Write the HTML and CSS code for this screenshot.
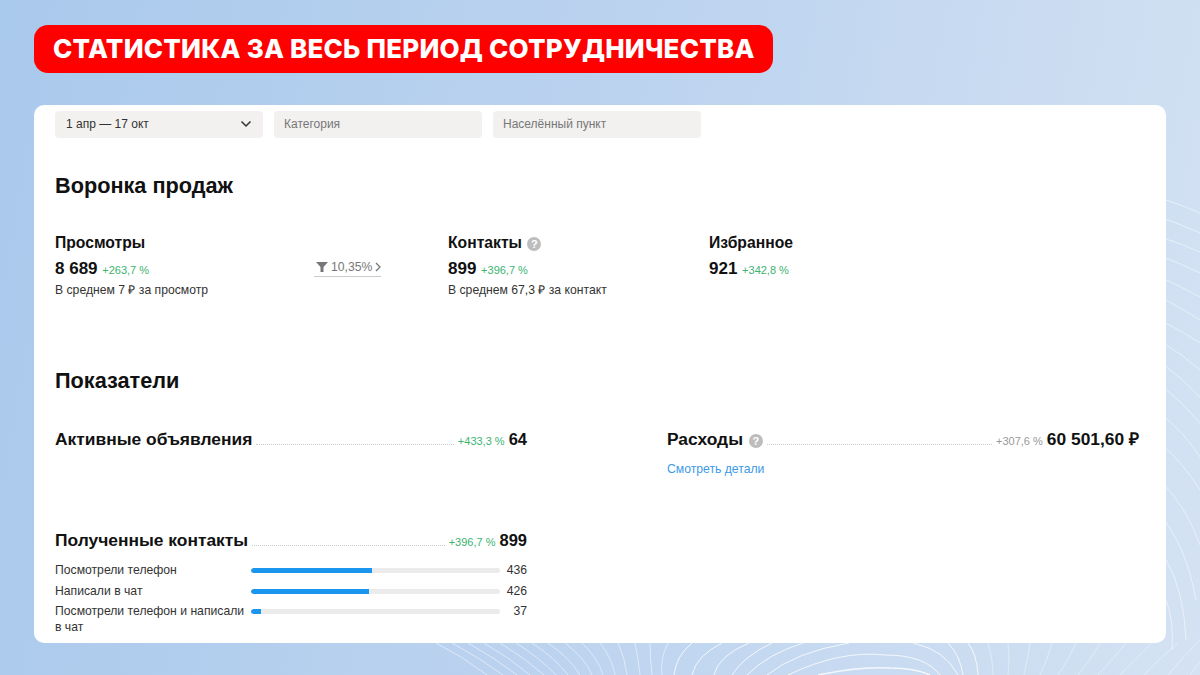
FILE: index.html
```html
<!DOCTYPE html>
<html lang="ru">
<head>
  <meta charset="UTF-8" />
  <title>Статистика за весь период сотрудничества</title>
  <link rel="stylesheet" href="styles.css">
</head>
<body>
  <svg class="waves" width="1200" height="675" viewBox="0 0 1200 675" fill="none" stroke="#fff">
    <!-- справа от карточки -->
    <g stroke-opacity="0.5">
      <path d="M1160 198Q1180 204 1200 213"/>
      <path d="M1160 217Q1180 224 1200 233"/>
      <path d="M1160 237Q1180 243 1200 252"/>
      <path d="M1160 256Q1180 263 1200 273"/>
      <path d="M1160 277Q1180 286 1200 297"/>
      <path d="M1160 297Q1180 307 1200 320"/>
      <path d="M1160 320Q1180 330 1200 343"/>
      <path d="M1160 341Q1182 354 1200 370"/>
      <path d="M1160 362Q1182 378 1200 397"/>
      <path d="M1160 384Q1182 402 1200 423"/>
      <path d="M1160 413Q1184 432 1200 457"/>
      <path d="M1160 443Q1184 464 1200 490"/>
      <path d="M1160 480Q1186 506 1200 545"/>
      <path d="M1160 515Q1186 545 1196 600"/>
      <path d="M1166 560Q1184 590 1186 640"/>
      <path d="M1166 600Q1174 620 1172 650"/>
    </g>
    <!-- под карточкой, веер слева -->
    <g stroke-opacity="0.5">
      <path d="M436 643Q462 656 487 675"/>
      <path d="M452 643Q480 658 503 675"/>
      <path d="M468 643Q495 658 517 675"/>
      <path d="M484 643Q510 658 530 675"/>
      <path d="M500 643Q525 658 544 675"/>
      <path d="M516 643Q540 658 556 675"/>
      <path d="M532 643Q555 658 568 675"/>
      <path d="M548 643Q570 658 580 675"/>
      <path d="M565 643Q585 658 592 675"/>
      <path d="M582 643Q598 658 603 675"/>
      <path d="M600 643Q612 658 615 675"/>
      <path d="M618 643Q625 658 627 675"/>
      <path d="M635 643Q638 658 640 675"/>
      <path d="M650 643Q650 658 652 675"/>
      <path d="M668 643Q660 658 662 675"/>
    </g>
    <!-- центральные петли -->
    <g stroke-opacity="0.8">
      <path d="M692 643Q676 656 674 675"/>
      <path d="M722 643Q696 656 692 675"/>
      <path d="M749 643Q718 656 714 675"/>
      <path d="M772 643Q744 656 732 675"/>
      <path d="M803 643Q768 654 747 675"/>
      <path d="M849 643Q796 652 767 675"/>
      <path d="M788 675Q840 650 885 655Q925 655 940 675"/>
      <path d="M818 675Q860 666 890 668Q915 668 930 675" stroke-width="1.500"/>
      <path d="M913 643Q945 650 958 675"/>
      <path d="M948 643Q960 655 963 675"/>
      <path d="M968 643Q977 655 978 675"/>
    </g>
    <!-- бледные линии справа внизу -->
    <g stroke-opacity="0.4">
      <path d="M988 643Q993 658 993 675"/>
      <path d="M1008 643Q1010 658 1008 675"/>
      <path d="M1030 643Q1028 658 1024 675"/>
      <path d="M1052 643Q1048 658 1040 675"/>
      <path d="M1076 643Q1070 658 1058 675"/>
      <path d="M1100 643Q1092 658 1078 675"/>
      <path d="M1126 643Q1114 658 1098 675"/>
      <path d="M1152 643Q1136 658 1120 675"/>
      <path d="M1178 643Q1160 658 1144 675"/>
      <path d="M1200 640Q1184 656 1168 675"/>
      <path d="M1200 662Q1194 668 1190 675"/>
    </g>
  </svg>

  <h1 class="banner">СТАТИСТИКА ЗА ВЕСЬ ПЕРИОД СОТРУДНИЧЕСТВА</h1>

  <main class="card">
    <div class="filters">
      <div class="filter filter-date">
        <span>1 апр — 17 окт</span>
        <svg width="12" height="8" viewBox="0 0 12 8" fill="none" stroke="#333" stroke-width="1.5"><path d="M1.5 1.5 6 6l4.500-4.500"/></svg>
      </div>
      <div class="filter filter-empty">Категория</div>
      <div class="filter filter-empty">Населённый пункт</div>
    </div>

    <h2 class="section-title">Воронка продаж</h2>

    <div class="funnel">
      <div class="funnel-col">
        <div class="funnel-name">Просмотры</div>
        <div class="funnel-value">8 689 <span class="delta">+263,7 %</span></div>
        <div class="funnel-note">В среднем 7 ₽ за просмотр</div>
        <div class="conversion">
          <svg width="12" height="10" viewBox="0 0 12 10" fill="#777"><path d="M0 0h12L7.500 5v5h-3V5z"/></svg>
          <span>10,35%</span>
          <svg width="6" height="10" viewBox="0 0 6 10" fill="none" stroke="#777" stroke-width="1.300"><path d="m1 1 4 4-4 4"/></svg>
        </div>
      </div>
      <div class="funnel-col">
        <div class="funnel-name">Контакты <span class="hint">?</span></div>
        <div class="funnel-value">899 <span class="delta">+396,7 %</span></div>
        <div class="funnel-note">В среднем 67,3 ₽ за контакт</div>
      </div>
      <div class="funnel-col">
        <div class="funnel-name">Избранное</div>
        <div class="funnel-value">921 <span class="delta">+342,8 %</span></div>
      </div>
    </div>

    <h2 class="section-title section-stats">Показатели</h2>

    <div class="stats">
      <div class="stats-left">
        <div class="stat-row">
          <span class="stat-name">Активные объявления</span>
          <span class="dots"></span>
          <span class="delta">+433,3 %</span>
          <span class="stat-value">64</span>
        </div>

        <div class="stat-row stat-contacts">
          <span class="stat-name">Полученные контакты</span>
          <span class="dots"></span>
          <span class="delta">+396,7 %</span>
          <span class="stat-value">899</span>
        </div>
        <div class="bars">
          <div class="bar-row">
            <span class="bar-name">Посмотрели телефон</span>
            <span class="bar-track"><span class="bar-fill" style="width: 48.5%"></span></span>
            <span class="bar-num">436</span>
          </div>
          <div class="bar-row">
            <span class="bar-name">Написали в чат</span>
            <span class="bar-track"><span class="bar-fill" style="width: 47.4%"></span></span>
            <span class="bar-num">426</span>
          </div>
          <div class="bar-row">
            <span class="bar-name">Посмотрели телефон и написали в чат</span>
            <span class="bar-track"><span class="bar-fill" style="width: 4.2%"></span></span>
            <span class="bar-num">37</span>
          </div>
        </div>
      </div>

      <div class="stats-right">
        <div class="stat-row">
          <span class="stat-name">Расходы <span class="hint">?</span></span>
          <span class="dots"></span>
          <span class="delta delta-grey">+307,6 %</span>
          <span class="stat-value">60 501,60 ₽</span>
        </div>
        <a class="details" href="#">Смотреть детали</a>
      </div>
    </div>
  </main>
</body>
</html>
```

FILE: styles.css
```css
* { box-sizing: border-box; }

body {
  margin: 0;
  width: 1200px;
  height: 675px;
  overflow: hidden;
  position: relative;
  padding: 25px 34px 0;
  font-family: "Liberation Sans", Arial, sans-serif;
  color: #111;
  background: linear-gradient(100deg, #a9c9ec 0%, #bcd3ef 50%, #d4e2f3 100%);
}

.waves { position: absolute; left: 0; top: 0; }

.banner {
  position: relative;
  width: 739px;
  height: 48px;
  margin: 0 0 32px;
  padding-left: 19px;
  border-radius: 14px;
  background: #fe0000;
  color: #fff;
  font-family: Inter, "Open Sans", sans-serif;
  font-size: 26px;
  font-weight: 800;
  letter-spacing: 0.2px;
  line-height: 48px;
  white-space: nowrap;
}

.card {
  position: relative;
  height: 538px;
  padding: 6px 27px 0 21px;
  border-radius: 10px;
  background: #fff;
}

/* фильтры */
.filters { display: flex; gap: 11px; }

.filter {
  width: 208px;
  height: 27px;
  padding: 0 11px;
  border-radius: 4px;
  background: #f2f1f0;
  font-size: 12px;
  line-height: 26px;
  color: #333;
}
.filter-date { display: flex; justify-content: space-between; align-items: center; padding-bottom: 1px; }
.filter-empty { color: #777; padding-left: 10px; }

.section-title {
  margin: 35px 0 0;
  font-size: 21.7px;
  line-height: 26px;
  font-weight: 700;
  color: #111;
}

/* воронка */
.funnel {
  display: grid;
  grid-template-columns: 393px 261px 1fr;
  margin-top: 35px;
  height: 134px;
}
.funnel-col { position: relative; }
.funnel-name { font-size: 15.7px; font-weight: 700; line-height: 18px; }
.funnel-value { margin-top: 7px; font-size: 17px; font-weight: 700; line-height: 20px; }
.funnel-note { margin-top: 2px; font-size: 12.2px; line-height: 16px; color: #333; }

.delta { font-size: 11px; font-weight: 400; color: #3cb371; }
.delta-grey { color: #999; }

.hint {
  display: inline-block;
  width: 14px;
  height: 14px;
  margin-left: 1px;
  border-radius: 50%;
  background: #bdbdbd;
  color: #fff;
  font-size: 11px;
  font-weight: 700;
  line-height: 14px;
  text-align: center;
  vertical-align: 0;
}

.conversion {
  position: absolute;
  left: 259px;
  top: 25px;
  display: flex;
  align-items: center;
  gap: 3px;
  padding: 0 0 1px 2px;
  border-bottom: 1px solid #ccc;
  font-size: 12.2px;
  line-height: 16px;
  color: #777;
}

/* показатели */
.section-stats { margin-top: 0; }

.stats {
  display: grid;
  grid-template-columns: 472px 472px;
  column-gap: 140px;
  margin-top: 34px;
}

.stat-row { display: flex; align-items: baseline; gap: 3px; }
.stat-name { font-size: 17.4px; font-weight: 700; line-height: 22px; white-space: nowrap; }
.stat-value { font-size: 16.5px; font-weight: 700; line-height: 22px; white-space: nowrap; margin-left: 1px; }
.stats-right .stat-value { font-size: 17.4px; }
.dots { flex: 1; border-bottom: 1px dotted #ccc; margin: 0 1px; }

.stat-contacts { margin-top: 79px; }

.details {
  display: block;
  margin-top: 11px;
  font-size: 12.2px;
  line-height: 16px;
  color: #3c9ae8;
  text-decoration: none;
}

.bars { margin-top: 11px; }
.bar-row { display: grid; grid-template-columns: 196px 249px 1fr; align-items: start; margin-bottom: 4.7px; }
.bar-name { font-size: 12.2px; line-height: 16px; color: #333; }
.bar-track {
  display: block;
  height: 5px;
  margin-top: 6px;
  border-radius: 3px;
  background: #ebebeb;
  overflow: hidden;
}
.bar-fill { display: block; height: 100%; background: #1a96ee; border-radius: 3px 0 0 3px; }
.bar-num { font-size: 12.2px; line-height: 16px; text-align: right; color: #333; }
```
